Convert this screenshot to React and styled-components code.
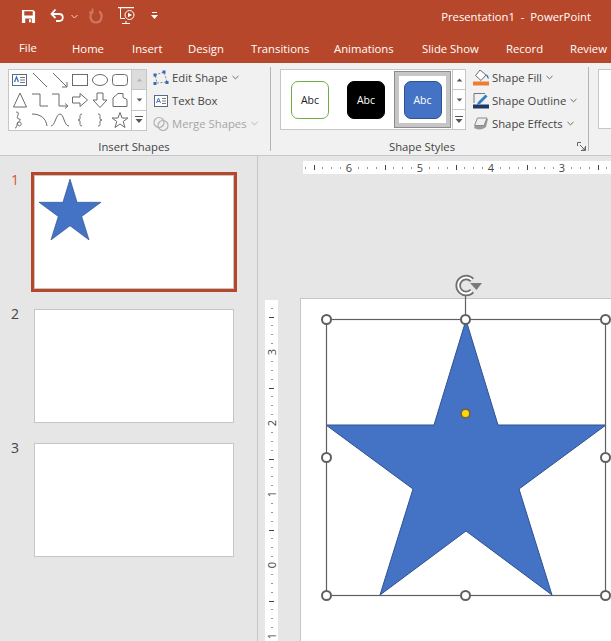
import React from "react";
import styled, { createGlobalStyle } from "styled-components";

const GlobalStyle = createGlobalStyle`
  html, body {
    margin: 0;
    padding: 0;
    background: #e6e6e6;
    overflow: hidden;
  }
  * {
    box-sizing: border-box;
  }
`;

const FONT = `"Open Sans", "Noto Sans", sans-serif`;
const BRAND = "#b7472a";

const Page = styled.div`
  width: 611px;
  height: 641px;
  display: flex;
  flex-direction: column;
  overflow: hidden;
  font-family: ${FONT};
  font-size: 11.3px;
  color: #444;
`;

const TitleBar = styled.div`
  height: 34px;
  flex: none;
  background: ${BRAND};
  display: flex;
  align-items: center;
  padding: 0 20px 2px 21px;
`;

const QuickIcon = styled.svg`
  display: block;
  flex: none;
  margin-right: ${(p) => p.$gap || 0}px;
`;

const DocTitle = styled.div`
  margin-left: auto;
  color: #fff;
  white-space: pre;
`;

const TabBar = styled.div`
  height: 29px;
  flex: none;
  background: ${BRAND};
  display: flex;
  align-items: center;
  padding: 0 0 0 19px;
  overflow: hidden;
  white-space: nowrap;
`;

const Tab = styled.div`
  color: #fff;
  flex: none;
  width: ${(p) => p.$width}px;
  margin-top: ${(p) => (p.$file ? -2 : 0)}px;
`;

const Ribbon = styled.div`
  height: 93px;
  flex: none;
  background: #f1f1f1;
  border-bottom: 1px solid #c6c6c6;
  display: flex;
  align-items: flex-start;
`;

const Group = styled.div`
  position: relative;
  flex: ${(p) => (p.$grow ? 1 : "none")};
  width: ${(p) => p.$width}px;
  height: 84px;
  margin-top: 4px;
  padding: 2px 0 0 ${(p) => p.$pad}px;
  border-right: ${(p) => (p.$grow ? "none" : "1px solid #b4b4b4")};
  display: flex;
  flex-direction: column;
`;

const GroupBody = styled.div`
  display: flex;
  align-items: flex-start;
`;

const GroupLabel = styled.div`
  margin-top: auto;
  margin-bottom: -4px;
  height: 16px;
  line-height: 16px;
  text-align: center;
  color: #444;
  padding-right: ${(p) => p.$shift || 0}px;
  margin-left: ${(p) => p.$back || 0}px;
`;

const Launcher = styled.svg`
  position: absolute;
  right: 2px;
  bottom: 0;
`;

const Gallery = styled.div`
  display: flex;
  height: ${(p) => p.$height}px;
  background: #fff;
  border: 1px solid #c6c6c6;
  flex: none;
`;

const ShapeGrid = styled.div`
  display: grid;
  grid-template-columns: repeat(6, 20px);
  grid-auto-rows: 20px;
  padding: 0 1px;
  width: 122px;
`;

const ShapeCell = styled.div`
  display: flex;
  align-items: center;
  justify-content: center;
`;

const ScrollColumn = styled.div`
  display: flex;
  flex-direction: column;
  width: ${(p) => p.$width}px;
  flex: none;
  border-left: 1px solid #c6c6c6;
`;

const ScrollButton = styled.div`
  flex: 1;
  display: flex;
  align-items: center;
  justify-content: center;
  background: ${(p) => (p.$off ? "#dcdcdc" : "#fff")};
  & + & {
    border-top: 1px solid #c6c6c6;
  }
`;

const StyleList = styled.div`
  width: 171px;
  flex: none;
  display: flex;
  align-items: center;
  padding-left: 10px;
`;

const StyleFrame = styled.div`
  flex: none;
  width: ${(p) => (p.$active ? 57 : 38)}px;
  height: ${(p) => (p.$active ? 57 : 38)}px;
  margin-left: ${(p) => (p.$active ? -9 : 0)}px;
  margin-right: ${(p) => (p.$active ? 0 : 18)}px;
  display: flex;
  align-items: center;
  justify-content: center;
  background: ${(p) => (p.$active ? "#fff" : "transparent")};
  border: ${(p) => (p.$active ? "1px solid #8c8c8c" : "none")};
  box-shadow: ${(p) => (p.$active ? "inset 0 0 0 4px #c6c6c6" : "none")};
`;

const StyleChip = styled.div`
  width: 38px;
  height: 38px;
  border-radius: 7px;
  flex: none;
  display: flex;
  align-items: center;
  justify-content: center;
  font-size: 10.5px;
  background: ${(p) => p.$bg};
  border: 1px solid ${(p) => p.$line};
  color: ${(p) => p.$fg};
`;

const Commands = styled.div`
  display: flex;
  flex-direction: column;
  margin: -3px 0 0 ${(p) => p.$gap}px;
`;

const Command = styled.div`
  height: 23px;
  display: flex;
  align-items: center;
  gap: 3px;
  white-space: nowrap;
  color: ${(p) => (p.$off ? "#a6a6a6" : "#444")};
`;

const Chevron = styled.svg`
  margin-left: 1px;
  flex: none;
`;

const EmptyGallery = styled.div`
  height: 60px;
  background: #fff;
  border: 1px solid #c6c6c6;
  border-right: none;
  margin-left: 0;
  width: 100%;
`;

const Workspace = styled.div`
  flex: 1;
  display: flex;
  min-height: 0;
`;

const SlidePanel = styled.div`
  width: 257px;
  flex: none;
  padding: 19px 0 0 11px;
  display: flex;
  flex-direction: column;
  gap: 20px;
`;

const SlideRow = styled.div`
  display: flex;
  align-items: flex-start;
`;

const SlideNumber = styled.div`
  width: 23px;
  flex: none;
  font-size: 14px;
  line-height: 14px;
  margin-top: -2px;
  color: ${(p) => (p.$active ? "#d0553a" : "#444")};
`;

const Thumb = styled.div`
  width: 200px;
  height: 114px;
  background: #fff;
  border: 1px solid #c6c6c6;
  box-shadow: ${(p) => (p.$active ? `0 0 0 3px ${BRAND}` : "none")};
`;

const ThumbStar = styled.svg`
  display: block;
  margin: 3px 0 0 4px;
`;

const EditArea = styled.div`
  flex: 1;
  min-width: 0;
  border-left: 1px solid #c6c6c6;
  display: flex;
  flex-direction: column;
`;

const TopRuler = styled.svg`
  display: block;
  flex: none;
  margin: 5px 0 0 45px;
  background: #fff;
`;

const CanvasRow = styled.div`
  flex: 1;
  min-height: 0;
  display: flex;
  align-items: flex-start;
  margin-top: 124px;
`;

const SideRuler = styled.svg`
  display: block;
  flex: none;
  margin: 2px 0 0 7px;
  background: #fff;
`;

const Slide = styled.div`
  position: relative;
  flex: 1;
  align-self: stretch;
  margin-left: 22px;
  background: #fff;
  border-top: 1px solid #c6c6c6;
  border-left: 1px solid #c6c6c6;
`;

const Selection = styled.svg`
  position: absolute;
  left: 17px;
  top: -27px;
  overflow: visible;
`;

const STAR = "140,0 172,105 280,105 193,169 226,275 140,211 54,275 87,169 0,105 108,105";

const TABS = [
  ["File", 53, true],
  ["Home", 60],
  ["Insert", 56],
  ["Design", 63],
  ["Transitions", 83],
  ["Animations", 88],
  ["Slide Show", 84],
  ["Record", 64],
  ["Review", 50],
];

const GRID_SHAPES = [
  <g key="tb">
    <rect x="2.5" y="4.5" width="14" height="11" fill="#fff" stroke="#5a6a80" />
    <path d="M4.5 12 l2-5 2 5" fill="none" stroke="#3f74c4" strokeWidth="1.3" />
    <path d="M10 7.5h5M10 10h5M10 12.5h5" stroke="#777" />
  </g>,
  <path key="ln" d="M3 3 L17 17" />,
  <path key="ar" d="M3 3 L17 17 M17 12 V17 H12" />,
  <rect key="rc" x="2.5" y="4.5" width="15" height="11" />,
  <ellipse key="el" cx="10" cy="10" rx="7.5" ry="5.5" />,
  <rect key="rr" x="2.5" y="4.5" width="15" height="11" rx="3" />,
  <path key="tr" d="M10 3 L16.5 17 H3.5 Z" />,
  <path key="el1" d="M2 4 H10 V16 H18" />,
  <path key="el2" d="M2 4 H9 V16 H18 M15 13.5 L18 16 15 18.5" />,
  <path key="ra" d="M2.5 7 H10 V3.5 L17.5 10 10 16.5 V13 H2.5 Z" />,
  <path key="da" d="M7 3 H13 V10 H17 L10 17.5 3 10 H7 Z" />,
  <path key="fl" d="M3 16.5 V8 L8 3.5 H13 V7 C13 9 17 8 17 10 V16.5 Z" />,
  <path key="sq" d="M6 2 C12 2 4 8 9 9 C14 10 5 12 8 15 C11 18 13 12 9 12 C6 12 8 18 5 18" />,
  <path key="ar2" d="M2 4 C10 4 16 8 17 16" />,
  <path key="cv" d="M1 16 C5 16 6 4 10 4 C14 4 14 16 19 16" />,
  <path key="lb" d="M12 4 C10 4 10 5 10 6.5 V8 C10 9.5 9.5 10 8 10 C9.5 10 10 10.5 10 12 V13.5 C10 15 10 16 12 16" />,
  <path key="rb" d="M8 4 C10 4 10 5 10 6.5 V8 C10 9.5 10.5 10 12 10 C10.5 10 10 10.5 10 12 V13.5 C10 15 10 16 8 16" />,
  <path key="st" d="M10 2.5 L12 8 H18 L13.2 11.5 15 17.5 10 14 5 17.5 6.8 11.5 2 8 H8 Z" />,
];

const ShapeIcon = ({ children }) => (
  <svg width="20" height="20" viewBox="0 0 20 20" fill="none" stroke="#6b6b6b" strokeWidth="1">
    {children}
  </svg>
);

const Up = ({ off }) => (
  <svg width="7" height="4" viewBox="0 0 8 5">
    <path d="M4 0.5 L7.5 4.5 H0.5 Z" fill={off ? "#b5b5b5" : "#555"} />
  </svg>
);
const Down = () => (
  <svg width="7" height="4" viewBox="0 0 8 5">
    <path d="M0.5 0.5 H7.5 L4 4.5 Z" fill="#555" />
  </svg>
);
const More = () => (
  <svg width="8" height="8" viewBox="0 0 8 8">
    <path d="M0 0.5 H8" stroke="#555" />
    <path d="M0.5 3 H7.5 L4 7 Z" fill="#555" />
  </svg>
);

const Scroller = ({ width, off }) => (
  <ScrollColumn $width={width}>
    <ScrollButton $off={off}>
      <Up off={off} />
    </ScrollButton>
    <ScrollButton>
      <Down />
    </ScrollButton>
    <ScrollButton>
      <More />
    </ScrollButton>
  </ScrollColumn>
);

const Caret = ({ color = "#6b6b6b" }) => (
  <Chevron width="7" height="5" viewBox="0 0 7 5" fill="none" stroke={color}>
    <path d="M0.5 1 L3.5 3.8 6.5 1" />
  </Chevron>
);

const EditShapeIcon = () => (
  <svg width="16" height="16" viewBox="0 0 16 16">
    <path d="M2 5 L11 2 L14 12 L4 13 Z" fill="none" stroke="#8a8a8a" strokeDasharray="2 1.5" />
    <g fill="#2f6db5">
      <rect x="0.5" y="3.5" width="3" height="3" />
      <rect x="9.5" y="0.5" width="3" height="3" />
      <rect x="0.5" y="12" width="3" height="3" />
      <rect x="12.5" y="11" width="3" height="3" />
    </g>
  </svg>
);

const TextBoxIcon = () => (
  <svg width="16" height="16" viewBox="0 0 16 16">
    <rect x="1.5" y="2.5" width="13" height="11" fill="#fff" stroke="#5a6a80" />
    <path d="M3.5 10 l2-5 2 5 M4.3 8.5 h2.4" fill="none" stroke="#3f74c4" />
    <path d="M9 5.5h4M9 8h4M9 10.5h4" stroke="#777" />
  </svg>
);

const MergeIcon = () => (
  <svg width="16" height="16" viewBox="0 0 16 16" fill="none" stroke="#b0b0b0" strokeWidth="1.2">
    <circle cx="6" cy="6.5" r="5" />
    <circle cx="10" cy="9.5" r="5" />
  </svg>
);

const FillIcon = () => (
  <svg width="16" height="16" viewBox="0 0 16 16">
    <path d="M7 0 L13 5 8 10.5 2.5 5.5 Z" fill="#fff" stroke="#6b6b6b" />
    <path d="M13 4.5 C15 4.5 16 7.5 15.5 9 C14.5 8.5 13.5 6.5 13 4.5 Z" fill="#2f6db5" />
    <rect x="0" y="11.5" width="16" height="4" fill="#ed7d31" />
  </svg>
);

const OutlineIcon = () => (
  <svg width="16" height="16" viewBox="0 0 16 16">
    <path d="M1 10 V0.5 H12" fill="none" stroke="#777" />
    <path d="M5 9 L12.5 1.5 14.5 3.5 7 11 4 11.5 Z" fill="#2f7fc9" />
    <rect x="0" y="11.5" width="16" height="4" fill="#1f3864" />
  </svg>
);

const EffectsIcon = () => (
  <svg width="16" height="16" viewBox="0 0 16 16">
    <path d="M5 3 H15 L13 11 C10 14 4 14 1 12 Z" fill="#9a9a9a" />
    <path d="M4.5 2 H14 L11 9.5 H1.5 Z" fill="#efefef" stroke="#8a8a8a" />
  </svg>
);

const RibbonCommand = ({ icon, label, caret, off }) => (
  <Command $off={off}>
    {icon}
    <span>{label}</span>
    {caret && <Caret color={off ? "#b5b5b5" : "#6b6b6b"} />}
  </Command>
);

const STEP = 8.875;

const TopRulerMarks = () => {
  const marks = [];
  for (let i = -5; i < 30; i++) {
    const x = 46 + i * STEP;
    const k = ((i % 8) + 8) % 8;
    if (k === 0) continue;
    if (k === 4) marks.push(<rect key={i} x={Math.round(x)} y="4" width="1" height="5" fill="#444" />);
    else marks.push(<rect key={i} x={Math.round(x)} y="6" width="1" height="2" fill="#9a9a9a" />);
  }
  return (
    <TopRuler width="308" height="13" viewBox="0 0 308 13">
      {marks}
      {[6, 5, 4, 3].map((n, i) => (
        <text key={n} x={46 + i * 71} y="11" textAnchor="middle" fontSize="11" fontFamily={FONT} fill="#444">
          {n}
        </text>
      ))}
    </TopRuler>
  );
};

const SideRulerMarks = () => {
  const zero = 265;
  const marks = [];
  for (let i = -8; i < 30; i++) {
    const y = zero - i * STEP;
    const k = ((i % 8) + 8) % 8;
    if (k === 0) continue;
    if (k === 4) marks.push(<rect key={i} x="4" y={Math.round(y)} width="5" height="1" fill="#444" />);
    else marks.push(<rect key={i} x="6" y={Math.round(y)} width="2" height="1" fill="#9a9a9a" />);
  }
  return (
    <SideRuler width="13" height="341" viewBox="0 0 13 341">
      {marks}
      {[3, 2, 1, 0, 1].map((n, i) => {
        const y = 52 + i * 71;
        return (
          <text
            key={i}
            transform={`translate(10.5 ${y}) rotate(-90)`}
            textAnchor="middle"
            fontSize="11"
            fontFamily={FONT}
            fill="#444"
          >
            {n}
          </text>
        );
      })}
    </SideRuler>
  );
};

const HANDLES = [
  [326.5, 319.5],
  [465.5, 319.5],
  [605.5, 319.5],
  [326.5, 457.5],
  [605.5, 457.5],
  [326.5, 595.5],
  [465.5, 595.5],
  [605.5, 595.5],
];

const STAR_PAGE = STAR.split(" ")
  .map((p) => {
    const [x, y] = p.split(",").map(Number);
    return `${x + 326},${y + 320}`;
  })
  .join(" ");

const ROTATE_ARC = "M472 291 A8 8 0 1 1 472 280";

const App = () => (
  <Page>
    <GlobalStyle />
    <TitleBar>
      <QuickIcon $gap={14} width="15" height="15" viewBox="0 0 16 16">
        <path
          fillRule="evenodd"
          fill="#fff"
          d="M1 1 H13 L15 3 V15 H1 Z M3.5 2.5 V7 H12.5 V2.5 Z M4.5 10 V15 H11.5 V10 Z M8.5 11 H10.5 V14 H8.5 Z"
        />
      </QuickIcon>
      <QuickIcon $gap={6} width="15" height="16" viewBox="0 0 15 16" fill="none" stroke="#fff" strokeWidth="1.8">
        <path d="M1.5 6 H9 C14 6 14 13 9 13 H6" />
        <path d="M5.5 1.5 L1.5 6 5.5 10" />
      </QuickIcon>
      <QuickIcon $gap={11} width="7" height="5" viewBox="0 0 7 5" fill="none" stroke="#f0d5cc">
        <path d="M0.5 1 L3.5 4 6.5 1" />
      </QuickIcon>
      <QuickIcon $gap={14} width="14" height="16" viewBox="0 0 14 16" fill="none" stroke="#cf7760" strokeWidth="2.2">
        <path d="M10 3.5 C14 5.5 13.5 14.5 7 14.5 C1 14.5 0 7 3.5 3.5" />
        <path d="M3.5 0.5 V4.5 H0" strokeWidth="1.8" />
      </QuickIcon>
      <QuickIcon $gap={16} width="18" height="18" viewBox="0 0 18 18" fill="none" stroke="#fff">
        <path d="M1 0.5 H17" strokeWidth="1.5" />
        <path d="M3.5 1 V11.5 H8 M9 14 V16.5 M5 16.5 H13" />
        <circle cx="12.5" cy="8" r="4.5" />
        <path d="M11 5.8 L15 8 11 10.2 Z" fill="#fff" stroke="none" />
      </QuickIcon>
      <QuickIcon width="7" height="8" viewBox="0 0 7 8">
        <path d="M1 0.5 H6" stroke="#fff" />
        <path d="M0 3 H7 L3.5 7 Z" fill="#fff" />
      </QuickIcon>
      <DocTitle>Presentation1  -  PowerPoint</DocTitle>
    </TitleBar>
    <TabBar>
      {TABS.map(([name, width, file]) => (
        <Tab key={name} $width={width} $file={file}>
          {name}
        </Tab>
      ))}
    </TabBar>
    <Ribbon>
      <Group $width={271} $pad={8}>
        <GroupBody>
          <Gallery $height={62}>
            <ShapeGrid>
              {GRID_SHAPES.map((shape) => (
                <ShapeCell key={shape.key}>
                  <ShapeIcon>{shape}</ShapeIcon>
                </ShapeCell>
              ))}
            </ShapeGrid>
            <Scroller width={15} off />
          </Gallery>
          <Commands $gap={6}>
            <RibbonCommand icon={<EditShapeIcon />} label="Edit Shape" caret />
            <RibbonCommand icon={<TextBoxIcon />} label="Text Box" />
            <RibbonCommand icon={<MergeIcon />} label="Merge Shapes" caret off />
          </Commands>
        </GroupBody>
        <GroupLabel $back={-8} $shift={2}>
          Insert Shapes
        </GroupLabel>
      </Group>
      <Group $width={318} $pad={9}>
        <GroupBody>
          <Gallery $height={61}>
            <StyleList>
              <StyleFrame>
                <StyleChip $bg="#fff" $line="#70ad47" $fg="#1c1c1c">
                  Abc
                </StyleChip>
              </StyleFrame>
              <StyleFrame>
                <StyleChip $bg="#000" $line="#000" $fg="#fff">
                  Abc
                </StyleChip>
              </StyleFrame>
              <StyleFrame $active>
                <StyleChip $bg="#4472c4" $line="#2f528f" $fg="#fff">
                  Abc
                </StyleChip>
              </StyleFrame>
            </StyleList>
            <Scroller width={13} />
          </Gallery>
          <Commands $gap={7}>
            <RibbonCommand icon={<FillIcon />} label="Shape Fill" caret />
            <RibbonCommand icon={<OutlineIcon />} label="Shape Outline" caret />
            <RibbonCommand icon={<EffectsIcon />} label="Shape Effects" caret />
          </Commands>
        </GroupBody>
        <GroupLabel $shift={24}>Shape Styles</GroupLabel>
        <Launcher width="9" height="9" viewBox="0 0 9 9" fill="none" stroke="#666">
          <path d="M8.5 4 V8.5 H4 M0.5 4 V0.5 H4 M3 3 L8 8 M8 5 V8 H5" />
        </Launcher>
      </Group>
      <Group $grow $pad={9}>
        <EmptyGallery />
      </Group>
    </Ribbon>
    <Workspace>
      <SlidePanel>
        <SlideRow>
          <SlideNumber $active>1</SlideNumber>
          <Thumb $active>
            <ThumbStar width="62" height="61" viewBox="0 0 280 275">
              <polygon points={STAR} fill="#4472c4" stroke="#2f528f" strokeWidth="3" />
            </ThumbStar>
          </Thumb>
        </SlideRow>
        <SlideRow>
          <SlideNumber>2</SlideNumber>
          <Thumb />
        </SlideRow>
        <SlideRow>
          <SlideNumber>3</SlideNumber>
          <Thumb />
        </SlideRow>
      </SlidePanel>
      <EditArea>
        <TopRulerMarks />
        <CanvasRow>
          <SideRulerMarks />
          <Slide>
            <Selection width="294" height="331" viewBox="318 272 294 331">
              <polygon points={STAR_PAGE} fill="#4472c4" stroke="#2f528f" strokeWidth="1" />
              <rect x="326.5" y="319.5" width="279" height="276" fill="none" stroke="#5f5f5f" strokeWidth="1.2" />
              <path d="M465.5 296 V319" stroke="#5f5f5f" strokeWidth="1.2" />
              <path d={ROTATE_ARC} fill="none" stroke="#6e6e6e" strokeWidth="5.5" />
              <path d={ROTATE_ARC} fill="none" stroke="#fff" strokeWidth="2" />
              <path d="M470 283 H482 L476.5 290 Z" fill="#7a7a7a" />
              {HANDLES.map(([x, y]) => (
                <circle key={`${x}-${y}`} cx={x} cy={y} r="4.5" fill="#fff" stroke="#5f5f5f" strokeWidth="2" />
              ))}
              <circle cx="465.5" cy="413.5" r="4.5" fill="#ffd800" stroke="#666" strokeWidth="2" />
            </Selection>
          </Slide>
        </CanvasRow>
      </EditArea>
    </Workspace>
  </Page>
);

export default App;
